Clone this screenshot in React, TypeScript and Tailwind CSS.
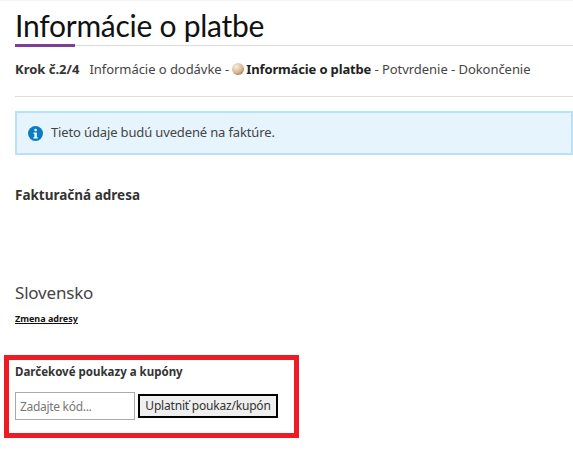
export default function App() {
  return (
    <div className="h-[452px] w-[573px] overflow-hidden bg-white font-['Noto_Sans',sans-serif] text-[#333]">
      <div className="h-px bg-[#f5f5f5]" />
      <div className="pl-[15px]">
        <div className="relative h-[45px] border-b border-[#dcdcdc]">
          <h1 className="font-['Lato',sans-serif] text-[30px] leading-[30px] pt-[9px] tracking-[-0.25px] font-normal text-[#111] whitespace-nowrap">
            Informácie o platbe
          </h1>
          <div className="absolute left-0 bottom-[-2px] h-[3px] w-[60px] bg-[#7f3f98]" />
        </div>
        <div className="mt-[13px] flex h-[20px] items-center whitespace-nowrap text-[13px] leading-[20px] text-[#444]">
          <b className="mr-[10px] font-bold text-[#333]">Krok č.2/4</b>
          <span className="tracking-[-0.05px]">Informácie o dodávke -&nbsp;</span>
          <span className="mr-[2px] h-[12px] w-[12px] rounded-full bg-[radial-gradient(circle_at_35%_30%,#fbeeda,#d9b48c_55%,#5a4a3a)]" />
          <b className="font-bold tracking-[-0.15px] text-[#222]">Informácie o platbe</b>
          <span className="tracking-[-0.05px]">&nbsp;- Potvrdenie - Dokončenie</span>
        </div>
        <div className="mt-[17px] h-px bg-[#dcdcdc]" />
        <div className="mt-[14px] flex h-[44px] items-center border-2 border-[#b9e1f8] bg-[#e6f5fd] pl-[11px]">
          <svg viewBox="0 0 16 16" className="h-[15px] w-[15px] shrink-0">
            <circle cx="8" cy="8" r="8" fill="#0a7cc1" />
            <rect x="6.8" y="3" width="2.6" height="2.6" rx="1" fill="#fff" />
            <path d="M5.8 7h3.6v5h1v1.2H5.8V12h1V8.2h-1z" fill="#fff" />
          </svg>
          <span className="ml-[8px] text-[13px] tracking-[-0.14px] text-[#444]">Tieto údaje budú uvedené na faktúre.</span>
        </div>
        <h2 className="mt-[30px] text-[13.5px] leading-[20px] font-bold text-[#333]">Fakturačná adresa</h2>
        <p className="mt-[78px] text-[17px] leading-[20px] tracking-[-0.2px] text-[#444]">Slovensko</p>
        <a className="mt-[9px] block text-[9px] leading-[14px] font-bold text-[#111] underline">Zmena adresy</a>
      </div>
      <div className="ml-[4px] mt-[29px] h-[83px] w-[295px] border-[5px] border-[#ed1c24] px-[6px] pt-[2px]">
        <h3 className="text-[11.5px] leading-[20px] font-bold text-[#333]">Darčekové poukazy a kupóny</h3>
        <div className="mt-[10px] flex items-center">
          <input
            placeholder="Zadajte kód..."
            className="h-[28px] w-[120px] border border-[#aaa] bg-white px-[4px] text-[12px] tracking-[-0.3px] outline-none placeholder:text-[#777]"
          />
          <button className="ml-[3px] h-[24px] w-[140px] border-2 border-black bg-[#efefef] text-[12px] tracking-[-0.2px] text-[#333]">
            Uplatniť poukaz/kupón
          </button>
        </div>
      </div>
    </div>
  );
}
